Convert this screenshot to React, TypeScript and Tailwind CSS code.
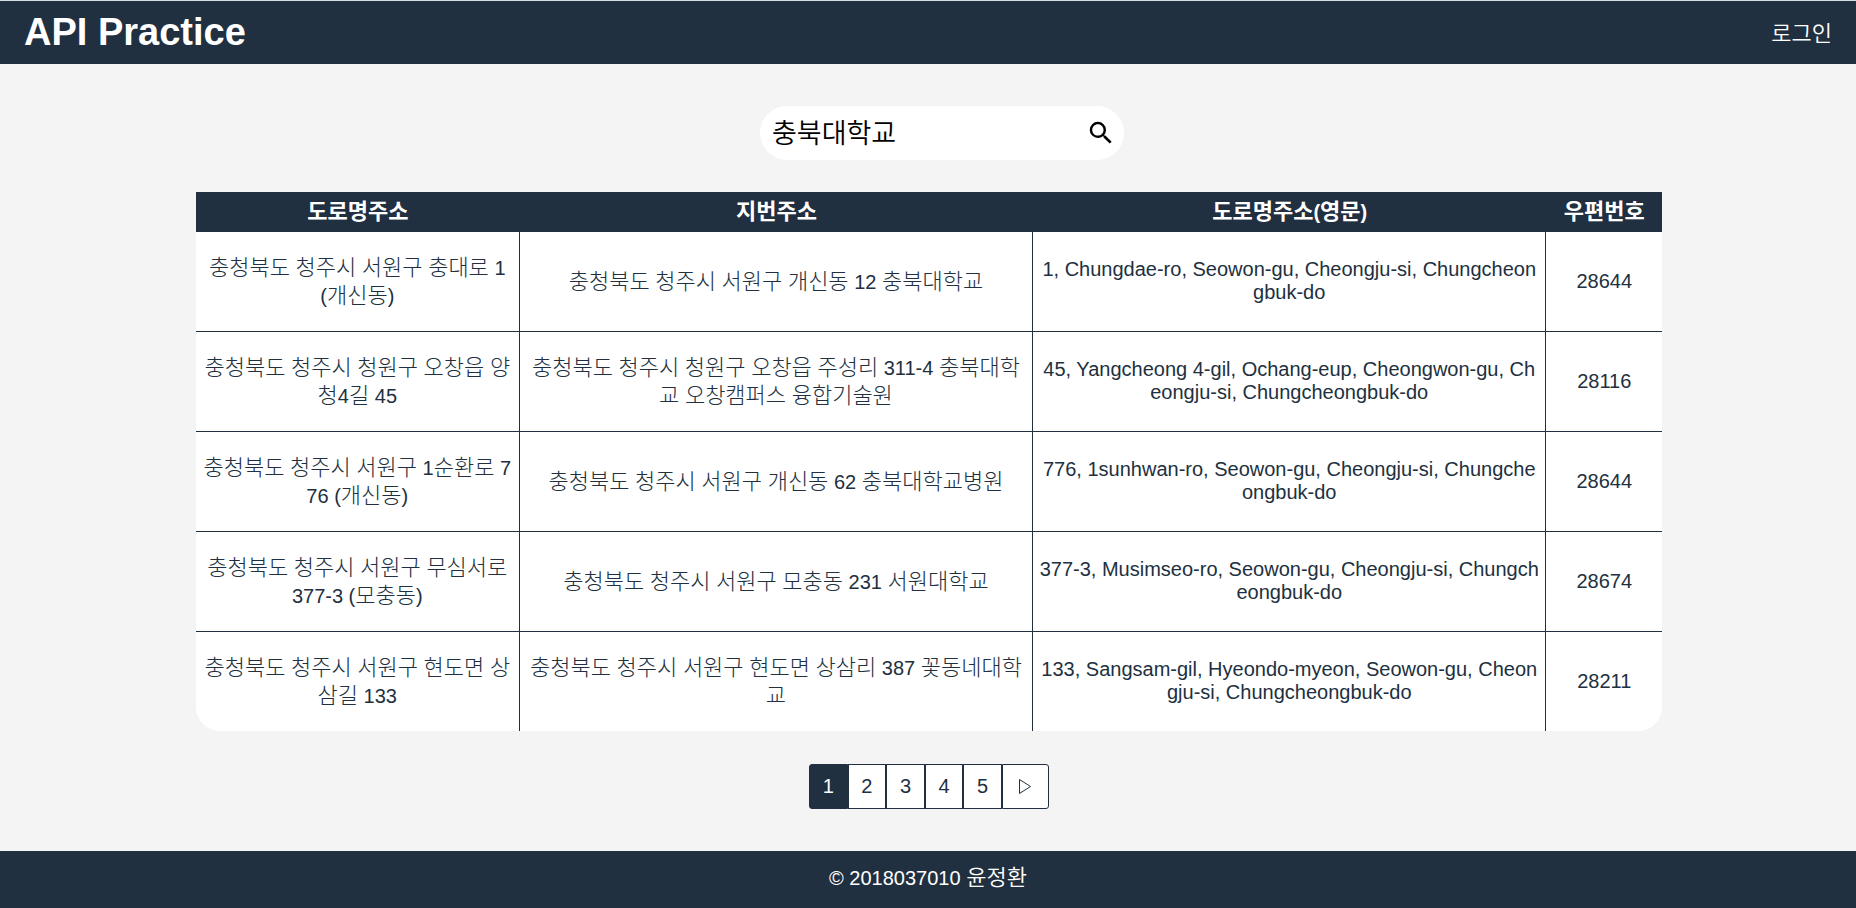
import { useState } from "react";
import { MdSearch } from "react-icons/md";

type Address = {
  road: string;
  lot: string;
  english: string;
  zip: string;
};

const addresses: Address[] = [
  {
    road: "충청북도 청주시 서원구 충대로 1 (개신동)",
    lot: "충청북도 청주시 서원구 개신동 12 충북대학교",
    english: "1, Chungdae-ro, Seowon-gu, Cheongju-si, Chungcheongbuk-do",
    zip: "28644",
  },
  {
    road: "충청북도 청주시 청원구 오창읍 양청4길 45",
    lot: "충청북도 청주시 청원구 오창읍 주성리 311-4 충북대학교 오창캠퍼스 융합기술원",
    english: "45, Yangcheong 4-gil, Ochang-eup, Cheongwon-gu, Cheongju-si, Chungcheongbuk-do",
    zip: "28116",
  },
  {
    road: "충청북도 청주시 서원구 1순환로 776 (개신동)",
    lot: "충청북도 청주시 서원구 개신동 62 충북대학교병원",
    english: "776, 1sunhwan-ro, Seowon-gu, Cheongju-si, Chungcheongbuk-do",
    zip: "28644",
  },
  {
    road: "충청북도 청주시 서원구 무심서로 377-3 (모충동)",
    lot: "충청북도 청주시 서원구 모충동 231 서원대학교",
    english: "377-3, Musimseo-ro, Seowon-gu, Cheongju-si, Chungcheongbuk-do",
    zip: "28674",
  },
  {
    road: "충청북도 청주시 서원구 현도면 상삼길 133",
    lot: "충청북도 청주시 서원구 현도면 상삼리 387 꽃동네대학교",
    english: "133, Sangsam-gil, Hyeondo-myeon, Seowon-gu, Cheongju-si, Chungcheongbuk-do",
    zip: "28211",
  },
];

const columns = ["도로명주소", "지번주소", "도로명주소(영문)", "우편번호"];
const pages = [1, 2, 3, 4, 5];

/* Sets Hangul slightly larger than the Latin text and digits beside it. */
function Mixed({ text }: { text: string }) {
  return (
    <>
      {text.split(/([가-힣]+)/).map((part, i) =>
        i % 2 === 1 ? (
          <span key={i} className="text-[22px]">
            {part}
          </span>
        ) : (
          part
        ),
      )}
    </>
  );
}

function Header() {
  return (
    <header className="flex h-16 items-center justify-between border-t border-[#d5dfe0] bg-[#213040] px-6 text-white">
      <h1 className="pb-0.5 text-[38px] leading-none font-bold">API Practice</h1>
      <a href="#login" className="pt-0.5 text-[22px] font-[350]">
        로그인
      </a>
    </header>
  );
}

function SearchBox() {
  const [query, setQuery] = useState("충북대학교");
  return (
    <form
      role="search"
      onSubmit={(e) => e.preventDefault()}
      className="ml-[26px] flex h-[54px] w-[364px] items-center rounded-full bg-white pr-2 pl-3 text-black"
    >
      <input
        type="text"
        aria-label="주소 검색"
        value={query}
        onChange={(e) => setQuery(e.target.value)}
        className="min-w-0 flex-1 bg-transparent pt-0.5 text-[27px] leading-10 font-[350] outline-none"
      />
      <button type="submit" aria-label="검색" className="cursor-pointer">
        <MdSearch className="size-[30px]" />
      </button>
    </form>
  );
}

function AddressTable() {
  return (
    <div className="mt-8 w-[79.1%] overflow-hidden rounded-b-3xl bg-white">
      <table className="w-full table-fixed border-separate border-spacing-0 text-center">
        <colgroup>
          <col className="w-[22.1%]" />
          <col className="w-[35%]" />
          <col className="w-[35%]" />
          <col className="w-[7.9%]" />
        </colgroup>
        <thead>
          <tr className="h-10 bg-[#213040] leading-7 text-white">
            {columns.map((label) => (
              <th key={label} scope="col" className="p-0 font-bold">
                <Mixed text={label} />
              </th>
            ))}
          </tr>
        </thead>
        <tbody className="[&>tr:last-child>td]:border-b-0 [&_td]:border-b [&_td]:border-[#213040] [&_td]:break-all">
          {addresses.map((a) => (
            <tr key={a.road} className="h-[100px] last:h-[99px]">
              <td className="border-r px-1.5 py-0 leading-[27px] font-light">
                <Mixed text={a.road} />
              </td>
              <td className="border-r px-1.5 py-0 leading-[27px] font-light">
                <Mixed text={a.lot} />
              </td>
              <td className="border-r px-[5px] pt-0 pb-0.5 leading-[23px]">{a.english}</td>
              <td className="px-[5px] py-0 leading-[23px]">{a.zip}</td>
            </tr>
          ))}
        </tbody>
      </table>
    </div>
  );
}

function Pagination() {
  const [current, setCurrent] = useState(1);
  return (
    <nav
      aria-label="페이지"
      className="mt-[33px] flex h-[45px] w-60 [&>button]:cursor-pointer [&>button]:border [&>button]:border-[#213040] [&>button]:pb-0.5"
    >
      {pages.map((page) => (
        <button
          key={page}
          type="button"
          aria-current={page === current ? "page" : undefined}
          onClick={() => setCurrent(page)}
          className={
            page === current
              ? "flex-1 bg-[#213040] text-white first:rounded-l-[3px]"
              : "flex-1 bg-white first:rounded-l-[3px]"
          }
        >
          {page}
        </button>
      ))}
      <button
        type="button"
        aria-label="다음"
        onClick={() => setCurrent((p) => Math.min(p + 1, pages.length))}
        className="flex w-[47px] items-center justify-center rounded-r-[3px] bg-white"
      >
        <svg viewBox="0 0 14 17" className="mt-0.5 h-[17px] w-[14px]" fill="none" stroke="currentColor">
          <path d="M1.5 1.5 12.5 8.5 1.5 15.5Z" />
        </svg>
      </button>
    </nav>
  );
}

export default function App() {
  return (
    <div className="flex min-h-screen flex-col bg-[#f4f4f4] font-['Liberation_Sans','Noto_Sans_CJK_KR',sans-serif] text-[20px] text-[#213040]">
      <Header />
      <main className="flex flex-1 flex-col items-center pt-[42px] pb-[42px] pl-[2px]">
        <SearchBox />
        <AddressTable />
        <Pagination />
      </main>
      <footer className="flex h-[57px] items-center justify-center bg-[#213040] pb-1 text-white">
        <p>
          © 2018037010 <span className="text-[22px] font-[350]">윤정환</span>
        </p>
      </footer>
    </div>
  );
}
